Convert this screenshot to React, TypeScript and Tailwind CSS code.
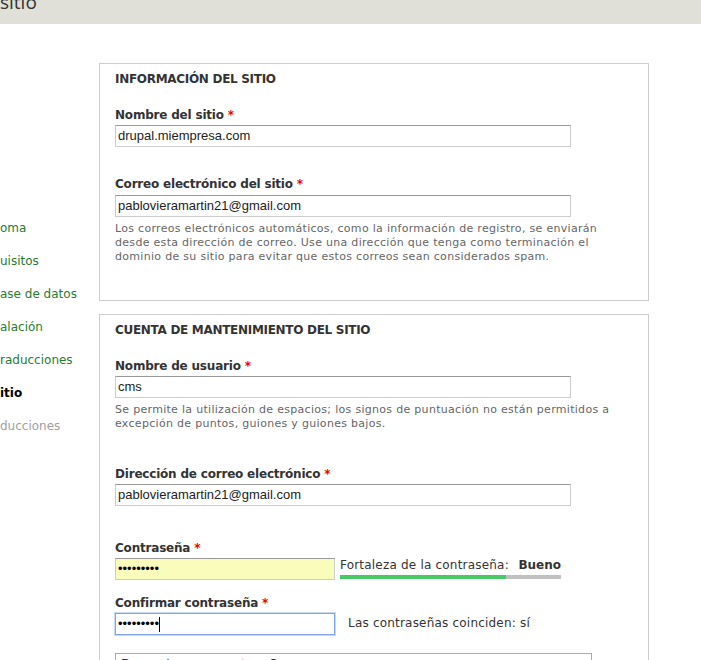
import React from "react";

const sans = "font-['DejaVu_Sans',sans-serif]";
const arial = "font-['Liberation_Sans',Arial,sans-serif]";

function Req() {
  return <span className="text-[#e00] font-bold"> *</span>;
}

function Label({ children, className = "" }: { children: React.ReactNode; className?: string }) {
  return (
    <div className={`text-[12px] leading-[16px] font-bold text-[#333] tracking-[-0.2px] ${className}`}>
      {children}
      <Req />
    </div>
  );
}

function TextBox({ value, className = "w-[456px]" }: { value: string; className?: string }) {
  return (
    <div
      className={`${arial} ${className} h-[22px] mt-[2px] border border-[#ccc] border-t-[#999] bg-white px-[2px] text-[13px] leading-[20px] text-[#222]`}
    >
      {value}
    </div>
  );
}

function Legend({ children }: { children: React.ReactNode }) {
  return <div className="text-[12px] leading-[16px] font-bold uppercase text-[#333] tracking-[-0.3px]">{children}</div>;
}

export default function App() {
  const steps = [
    { t: "oma", c: "text-[#2a7a32]" },
    { t: "uisitos", c: "text-[#2a7a32]" },
    { t: "ase de datos", c: "text-[#2a7a32]" },
    { t: "alación", c: "text-[#2a7a32]" },
    { t: "raducciones", c: "text-[#2a7a32]" },
    { t: "itio", c: "text-black font-bold" },
    { t: "ducciones", c: "text-[#a0a0a0]" },
  ];

  return (
    <div className={`${sans} w-[701px] h-[660px] overflow-hidden bg-white`}>
      <div className="h-[24px] bg-[#e0e0d8] overflow-hidden">
        <div className="font-['Open_Sans',sans-serif] text-[19px] leading-[24px] -mt-[10px] text-[#333]">sitio</div>
      </div>

      <div className="flex">
        <div className="w-[99px] shrink-0 pt-[196px]">
          {steps.map((s) => (
            <div key={s.t} className={`h-[33px] text-[12px] leading-[16px] whitespace-nowrap ${s.c}`}>
              {s.t}
            </div>
          ))}
        </div>

        <div className="pt-[39px]">
          <div className="w-[550px] h-[238px] border border-[#ccc] px-[15px] pt-[7px]">
            <Legend>Información del sitio</Legend>
            <Label className="mt-[20px]">Nombre del sitio</Label>
            <TextBox value="drupal.miempresa.com" />
            <Label className="mt-[29px]">Correo electrónico del sitio</Label>
            <TextBox value="pablovieramartin21@gmail.com" className="w-[456px] mt-[3px]" />
            <p className="mt-[5px] w-[500px] text-[11px] leading-[14px] tracking-[0.3px] text-[#666]">
              Los correos electrónicos automáticos, como la información de registro, se enviarán desde esta dirección
              de correo. Use una dirección que tenga como terminación el dominio de su sitio para evitar que estos
              correos sean considerados spam.
            </p>
          </div>

          <div className="mt-[13px] w-[550px] h-[400px] border border-[#ccc] px-[15px] pt-[7px]">
            <Legend>Cuenta de mantenimiento del sitio</Legend>
            <Label className="mt-[20px]">Nombre de usuario</Label>
            <TextBox value="cms" />
            <p className="mt-[5px] w-[500px] text-[11px] leading-[14px] tracking-[0.3px] text-[#666]">
              Se permite la utilización de espacios; los signos de puntuación no están permitidos a excepción de
              puntos, guiones y guiones bajos.
            </p>

            <Label className="mt-[35px]">Dirección de correo electrónico</Label>
            <TextBox value="pablovieramartin21@gmail.com" />

            <Label className="mt-[34px]">Contraseña</Label>
            <div className="flex items-start">
              <div
                className={`${arial} w-[220px] h-[22px] mt-[2px] border border-[#ccc] border-t-[#999] bg-[#f9fcbb] px-[2px] text-[13px] leading-[20px] text-black`}
              >
                •••••••••
              </div>
              <div className="ml-[5px] w-[221px]">
                <div className="flex justify-between text-[12px] leading-[16px] mt-[1px] tracking-[0.2px] text-[#333]">
                  <span>Fortaleza de la contraseña:</span>
                  <span className="font-bold tracking-normal">Bueno</span>
                </div>
                <div className="mt-[2px] h-[4px] bg-[#c0c0c0]">
                  <div className="h-full w-[75%] bg-[#47c965]" />
                </div>
              </div>
            </div>

            <Label className="mt-[15px]">Confirmar contraseña</Label>
            <div className="flex items-center">
              <div
                className={`${arial} w-[220px] h-[22px] mt-[2px] border border-[#7fa6ea] shadow-[0_0_0_1px_#c7d9f7] bg-white px-[2px] text-[13px] leading-[20px] text-black flex items-center`}
              >
                •••••••••
                <span className="inline-block w-[1px] h-[15px] bg-black" />
              </div>
              <span className="ml-[13px] text-[12px] leading-[16px] tracking-[0.2px] text-[#333]">
                Las contraseñas coinciden: sí
              </span>
            </div>

            <div className={`${arial} mt-[18px] w-[477px] h-[60px] border border-[#aaa] px-[5px] pt-[2px] text-[13px] leading-[16px] text-[#333]`}>
              Proporcione una contraseña segura
            </div>
          </div>
        </div>
      </div>
    </div>
  );
}
